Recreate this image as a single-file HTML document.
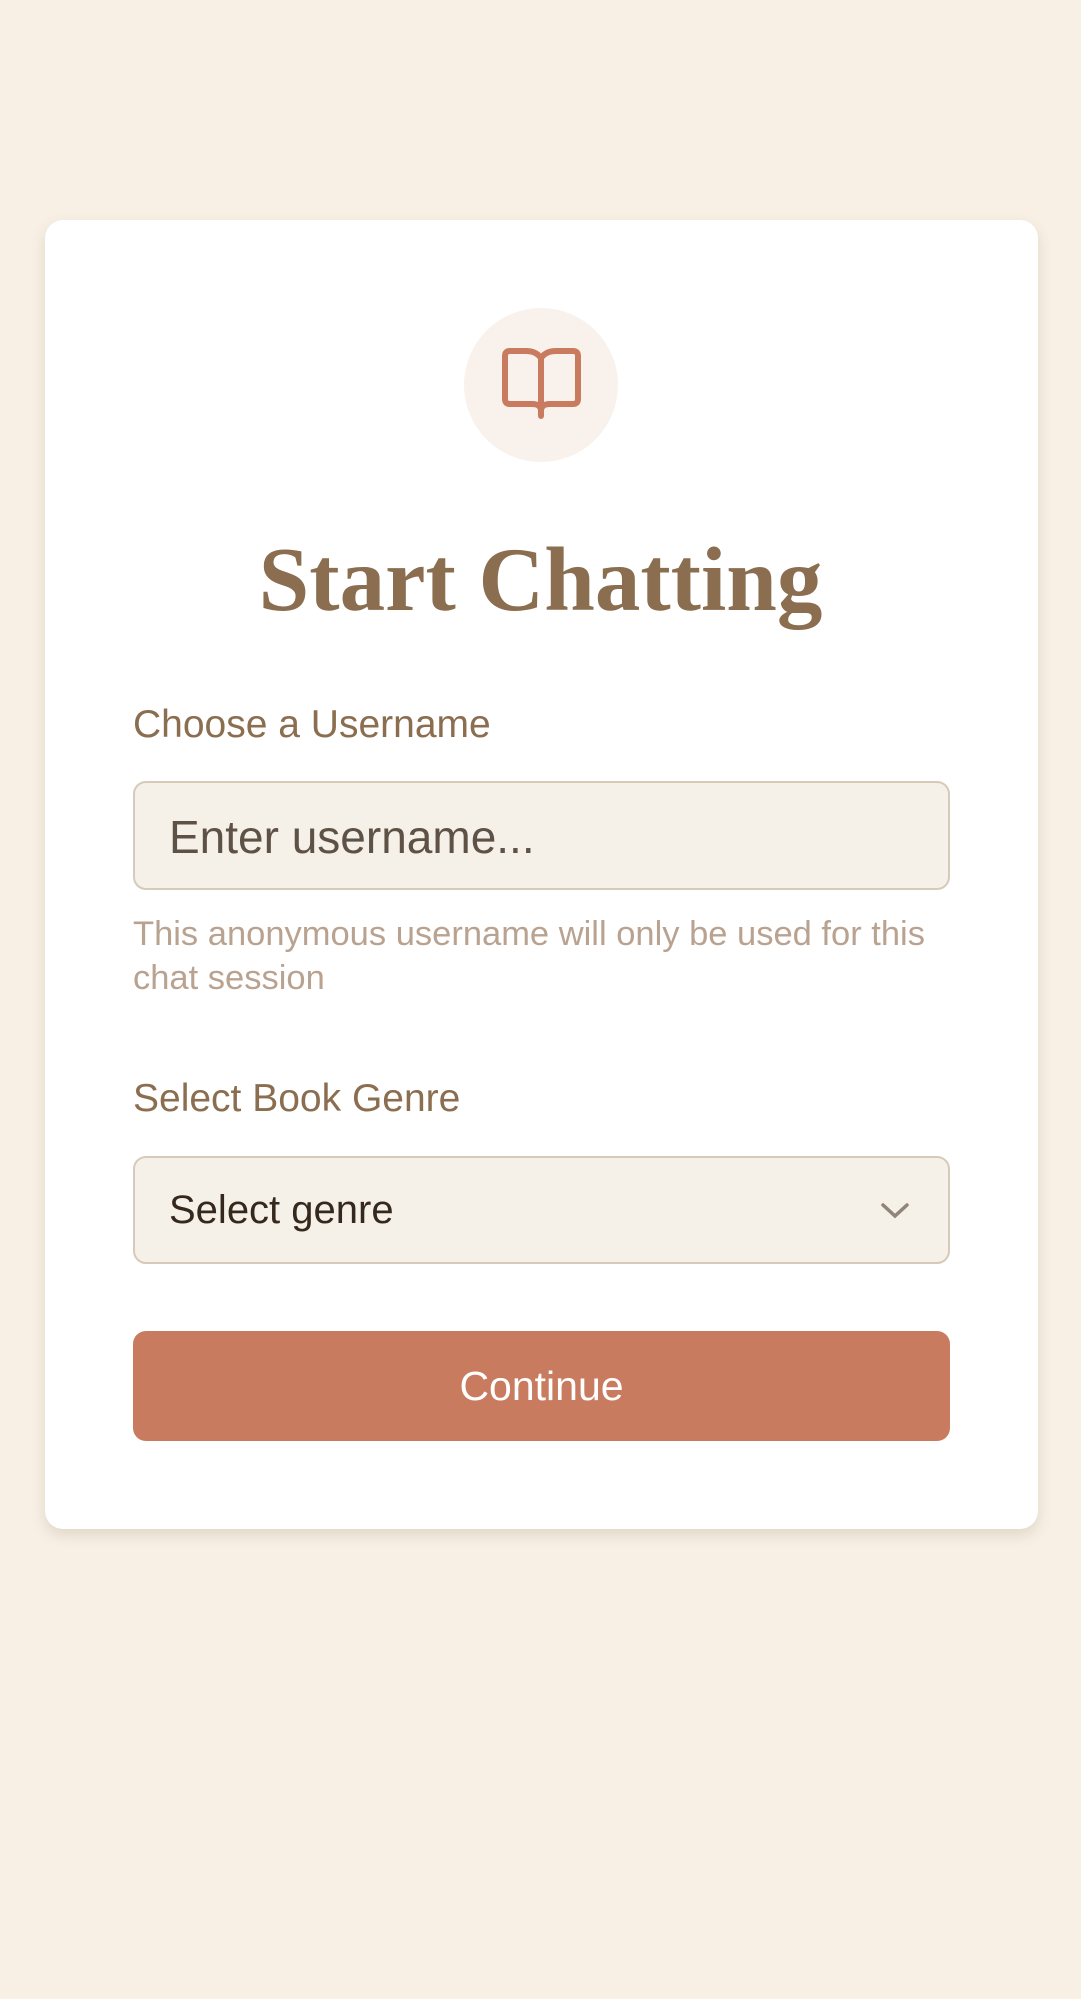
<!DOCTYPE html>
<html><head><meta charset="utf-8"><style>
*{box-sizing:border-box;margin:0;padding:0}
html,body{width:1081px;height:1999px;background:#f8f0e5;font-family:"Liberation Sans",sans-serif;overflow:hidden}
.card{position:absolute;left:45px;top:220px;width:993px;height:1309px;background:#fff;border-radius:18px;box-shadow:0 6px 14px rgba(120,100,70,0.18)}
.circ{position:absolute;left:464px;top:308px;width:154px;height:154px;border-radius:50%;background:#f9f1ec}
.circ svg{position:absolute;left:0;top:0}
h1{position:absolute;left:0;width:1081px;top:530px;text-align:center;font-family:"Liberation Serif",serif;font-weight:bold;font-size:91px;color:#8b6d4f;line-height:100px}
.lbl{position:absolute;left:133px;font-size:39px;color:#8b6d4f}
.box{position:absolute;left:133px;width:817px;background:#f5f0e8;border:2px solid #d6cabb;border-radius:13px}
.help{position:absolute;left:133px;top:912px;width:830px;font-size:34.5px;line-height:44px;color:#b9a390}
.btn{position:absolute;left:133px;top:1331px;width:817px;height:110px;background:#c87b5e;border-radius:13px;color:#fff;font-size:41px;text-align:center;line-height:110px}
</style></head><body>
<div class="card"></div>
<div class="circ"><svg width="154" height="154" viewBox="0 0 154 154"><path d="M77 50 Q72 43 62 43 H46 Q41 43 41 48 V91 Q41 96 46 96 H68 Q77 96 77 103 Q77 96 86 96 H109 Q114 96 114 91 V48 Q114 43 109 43 H92 Q82 43 77 50 Z M77 50 V108" fill="none" stroke="#c87b5e" stroke-width="6" stroke-linejoin="round" stroke-linecap="round"/></svg></div>
<h1>Start Chatting</h1>
<div class="lbl" style="top:703px">Choose a Username</div>
<div class="box" style="top:781px;height:109px"><span style="position:absolute;left:34px;top:27px;font-size:46px;color:#5e5246">Enter username...</span></div>
<div class="help">This anonymous username will only be used for this chat session</div>
<div class="lbl" style="top:1077px">Select Book Genre</div>
<div class="box" style="top:1156px;height:108px"><span style="position:absolute;left:34px;top:30px;font-size:40px;color:#35281c">Select genre</span>
<svg style="position:absolute;left:745px;top:43px" width="30" height="20" viewBox="0 0 30 20"><path d="M3 4 L15 15 L27 4" fill="none" stroke="#8f857a" stroke-width="3.5" stroke-linecap="round"/></svg></div>
<div class="btn">Continue</div>
</body></html>
